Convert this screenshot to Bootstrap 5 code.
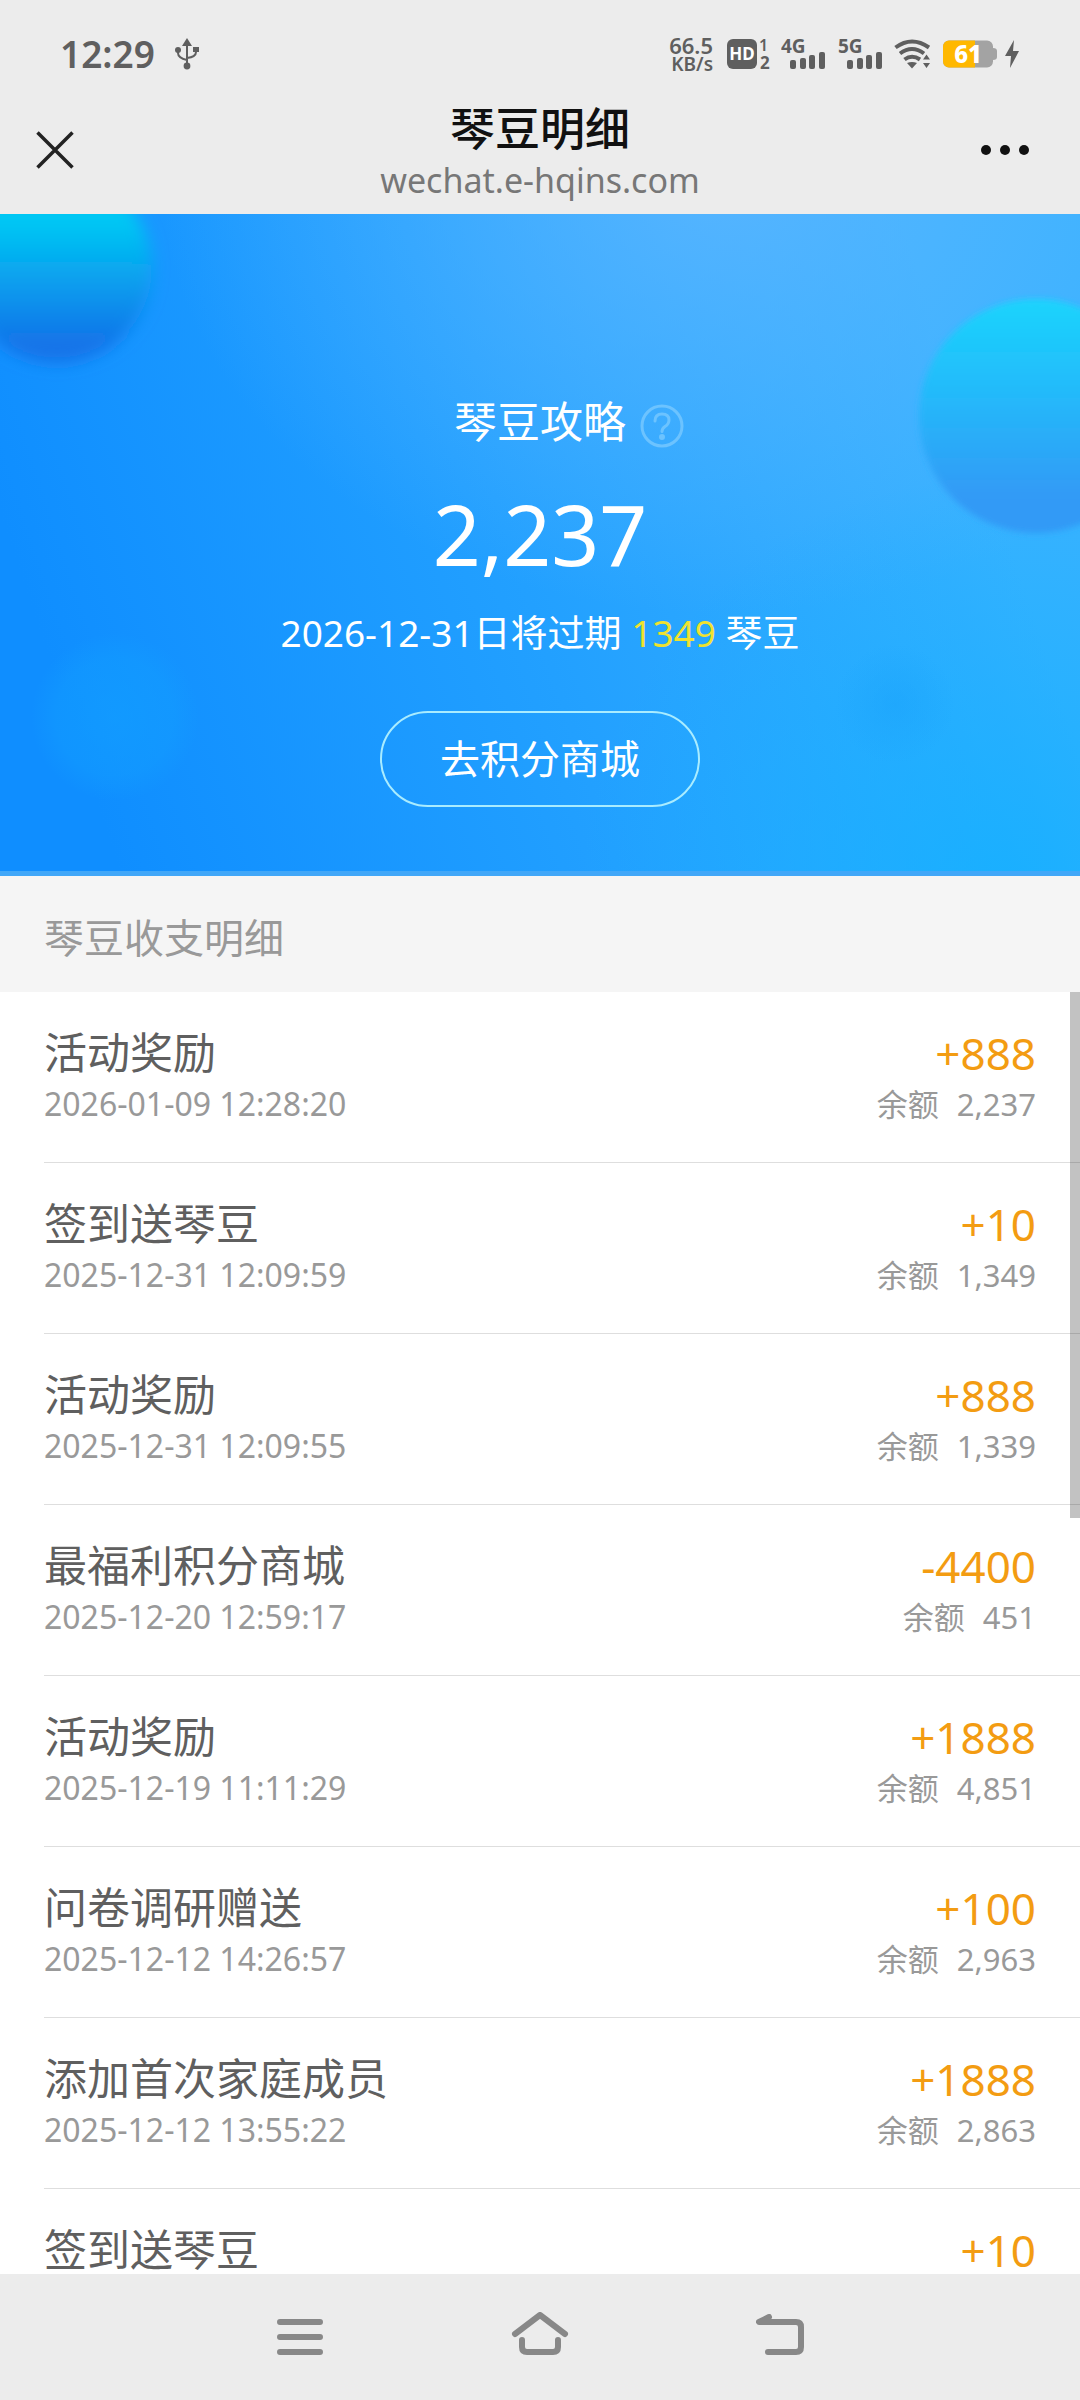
<!DOCTYPE html>
<html lang="zh-CN">
<head>
<meta charset="utf-8">
<meta name="viewport" content="width=device-width, initial-scale=1">
<title>琴豆明细</title>
<link href="https://cdn.jsdelivr.net/npm/bootstrap@5.3.0/dist/css/bootstrap.min.css" rel="stylesheet">
<style>
  body { font-family: "Noto Sans", "Noto Sans CJK SC", sans-serif; color: #5f5f5f; background: #fff; }
  svg { display: block; }
  .chrome-bg { background: #ececec; }
  .status-bar { height: 108px; padding: 0 60px; }
  .clock { font-size: 37px; line-height: 48px; font-weight: 600; }
  .net-speed { font-size: 19px; line-height: 18px; font-weight: 600; margin-right: 14px; }
  .net-speed .rate { font-size: 22px; line-height: 20px; }
  .title-bar { height: 106px; padding: 0 36px 22px; }
  .title-side { flex: 1 1 0; padding-right: 15px; }
  .page-title { font-size: 45px; line-height: 60px; font-weight: 500; color: #111; }
  .page-host { font-size: 34px; line-height: 42px; color: #777; }
  .hero { padding: 180px 0 64px; border-bottom: 5px solid #41a7f8; background: #1c9bff; }
  .hero-art { inset: 0; }
  .guide-link { font-size: 43px; line-height: 56px; }
  .guide-icon { left: 100%; top: 10px; margin-left: 14px; }
  .bean-total { font-size: 84px; line-height: 100px; margin-top: 34px; }
  .expiry { font-size: 37px; line-height: 50px; margin-top: 24px; }
  .expiry-count { color: #efe22f; }
  .mall-btn, .mall-btn:hover { width: 320px; height: 96px; margin-top: 53px; font-size: 40px; line-height: 48px; color: #fff; border: 2px solid #a9ecff; }
  .section-title { height: 116px; padding: 8px 44px 0; font-size: 40px; font-weight: 400; color: #999; background: #f5f5f5; }
  .record { height: 171px; margin-left: 44px; padding: 37px 44px 0 0; border-bottom: 1px solid #dedede; }
  .record-name { font-size: 43px; line-height: 48px; color: #5f5f5f; }
  .record-sum { font-size: 44px; line-height: 48px; color: #f39c12; }
  .record-note { font-size: 32px; line-height: 54px; color: #999; }
  .record-note.is-balance { font-size: 31px; }
  .figures { margin-left: 18px; }
  .scroll-thumb { top: 0; right: 0; width: 10px; height: 526px; background: rgba(0,0,0,.24); }
  .nav-keys { height: 126px; padding: 0 180px; }
</style>
</head>
<body>
<div class="d-flex flex-column vh-100 overflow-hidden">
  <header class="chrome-bg flex-shrink-0">
    <div class="status-bar d-flex align-items-center justify-content-between">
      <div class="d-flex align-items-center gap-3">
        <span class="clock">12:29</span>
        <svg class="ms-1" width="24" height="32" viewBox="0 0 24 32" fill="none" stroke="#5f5f5f" stroke-width="2" aria-hidden="true"><path d="M12 5v22M3 12v3q0 5 9 7M21 12v2q0 5-9 6"/><g fill="#5f5f5f" stroke="none"><path d="M12 0l5 8H7zM18 9h6v5h-6z"/><circle cx="3" cy="12" r="3"/><circle cx="12" cy="28" r="3.400"/></g></svg>
      </div>
      <div class="d-flex align-items-center">
        <div class="net-speed text-end"><div class="rate">66.5</div><div>KB/s</div></div>
        <svg class="me-2" width="46" height="44" viewBox="0 -6 46 44" fill="#5f5f5f" font-family="Noto Sans, sans-serif" font-weight="700" aria-label="HD"><rect y="1" width="30" height="30" rx="6"/><text x="15" y="22" font-size="17" text-anchor="middle" fill="#fff">HD</text><text x="32" y="13" font-size="16" font-weight="600">1</text><text x="33" y="31" font-size="17">2</text></svg>
        <svg width="45" height="44" viewBox="0 -6 45 44" fill="#5f5f5f" font-family="Noto Sans, sans-serif" font-weight="700" aria-label="4G"><text x="0" y="15" font-size="19">4G</text><rect x="9" y="22" width="6" height="9" rx="2"/><rect x="19" y="20" width="6" height="11" rx="2"/><rect x="28" y="17" width="6" height="14" rx="2"/><rect x="38" y="14" width="6" height="17" rx="2"/></svg>
        <svg class="ms-2" width="60" height="44" viewBox="-4 -6 60 44" fill="#5f5f5f" font-family="Noto Sans, sans-serif" font-weight="700" aria-label="5G"><text x="0" y="15" font-size="19">5G</text><rect x="9" y="22" width="6" height="9" rx="2"/><rect x="19" y="20" width="6" height="11" rx="2"/><rect x="28" y="17" width="6" height="14" rx="2"/><rect x="38" y="14" width="6" height="17" rx="2"/></svg>
        <svg width="37" height="32" viewBox="0 0 37 32" fill="none" stroke="#5f5f5f" stroke-width="4" aria-label="Wi-Fi"><path d="M1.500 9.500Q18 -2.500 35 9.500M6 15.500Q18 6.500 30 15.500M10.500 21.500Q18 16 26 21.500"/><path d="M18 30.500l-5-5.500q5-2 10 0z" fill="#5f5f5f" stroke="none"/><path d="M29 21.500l3.500-5 3.500 5zM29 25l3.500 5 3.500-5z" fill="#5f5f5f" stroke="#ececec" stroke-width="1" paint-order="stroke"/></svg>
        <svg class="mx-2" width="58" height="44" viewBox="-3 -6 58 44" font-family="Noto Sans, sans-serif" aria-label="61%"><path d="M7 2.500H45a6 6 0 0 1 6 6V23.500a6 6 0 0 1-6 6H7a6 6 0 0 1-6-6V8.500a6 6 0 0 1 6-6z" fill="#a3a3a3"/><path d="M51 10q4 0 4 3v6q0 3-4 3z" fill="#a3a3a3"/><path d="M33 2.500H7a6 6 0 0 0-6 6V23.500a6 6 0 0 0 6 6H33z" fill="#ffb800"/><text x="26" y="25" font-size="24" font-weight="800" text-anchor="middle" fill="#fff">61</text></svg>
        <svg width="15" height="32" viewBox="0 0 15 32" fill="#5f5f5f" aria-hidden="true"><path d="M9 2L0 18h6L5 30 14 13H8z"/></svg>
      </div>
    </div>
    <div class="title-bar d-flex align-items-center">
      <div class="title-side">
        <button type="button" class="btn p-0 border-0" aria-label="关闭"><svg width="38" height="38" viewBox="0 0 38 38" stroke="#222" stroke-width="3.500"><path d="M1.500 1.500l35 35M36.500 1.500l-35 35"/></svg></button>
      </div>
      <div class="text-center">
        <h1 class="page-title m-0">琴豆明细</h1>
        <div class="page-host">wechat.e-hqins.com</div>
      </div>
      <div class="title-side d-flex justify-content-end">
        <button type="button" class="btn p-0 border-0" aria-label="更多"><svg width="48" height="10" viewBox="0 0 48 10" fill="#111"><circle cx="5" cy="5" r="5"/><circle cx="24" cy="5" r="5"/><circle cx="43" cy="5" r="5"/></svg></button>
      </div>
    </div>
  </header>

  <section class="hero position-relative flex-shrink-0 text-white">
    <svg class="hero-art position-absolute w-100 h-100" viewBox="0 0 1080 657" preserveAspectRatio="none" aria-hidden="true">
      <defs>
        <linearGradient id="base" gradientUnits="userSpaceOnUse" x1="60" y1="480" x2="960" y2="180"><stop offset="0" stop-color="#0f8eff"/><stop offset=".5" stop-color="#22a0ff"/><stop offset="1" stop-color="#38b2ff"/></linearGradient>
        <radialGradient id="glow" gradientUnits="userSpaceOnUse" cx="0" cy="0" r="1" gradientTransform="translate(720 -40) scale(560 440)"><stop offset="0" stop-color="#5cb6ff" stop-opacity=".85"/><stop offset="1" stop-color="#5cb6ff" stop-opacity="0"/></radialGradient>
        <radialGradient id="corner" gradientUnits="userSpaceOnUse" cx="1000" cy="680" r="420"><stop offset="0" stop-color="#12b0ff" stop-opacity=".8"/><stop offset="1" stop-color="#12b0ff" stop-opacity="0"/></radialGradient>
        <linearGradient id="orbA" x1="0" y1="0" x2="0" y2="1"><stop offset=".25" stop-color="#00c8f4"/><stop offset=".9" stop-color="#1373e8"/></linearGradient>
        <linearGradient id="orbB" x1="0" y1="0" x2="0" y2="1"><stop offset="0" stop-color="#1ad4fd"/><stop offset=".4" stop-color="#24bafa"/><stop offset=".85" stop-color="#329af6"/></linearGradient>
        <radialGradient id="orbC"><stop offset="0" stop-color="#12a0ff" stop-opacity=".6"/><stop offset=".7" stop-color="#12a0ff" stop-opacity=".4"/><stop offset="1" stop-color="#12a0ff" stop-opacity="0"/></radialGradient>
        <radialGradient id="orbD"><stop offset="0" stop-color="#1aa2fb" stop-opacity=".5"/><stop offset="1" stop-color="#1aa2fb" stop-opacity="0"/></radialGradient>
        <filter id="softA" x="-20%" y="-20%" width="140%" height="140%"><feGaussianBlur stdDeviation="8"/></filter>
        <filter id="softB" x="-20%" y="-20%" width="140%" height="140%"><feGaussianBlur stdDeviation="3"/></filter>
      </defs>
      <rect width="1080" height="657" fill="url(#base)"/>
      <rect width="1080" height="657" fill="url(#glow)"/>
      <rect width="1080" height="657" fill="url(#corner)"/>
      <circle cx="57" cy="54" r="95" fill="url(#orbA)" filter="url(#softA)"/>
      <circle cx="1036" cy="202" r="117" fill="url(#orbB)" filter="url(#softB)"/>
      <circle cx="115" cy="503" r="84" fill="url(#orbC)"/>
      <circle cx="895" cy="490" r="60" fill="url(#orbD)"/>
    </svg>
    <div class="position-relative d-flex flex-column align-items-center">
      <a href="#guide" class="guide-link position-relative text-white text-decoration-none">琴豆攻略<span class="guide-icon position-absolute"><svg width="44" height="44" viewBox="0 0 44 44" fill="none" stroke="#6cc3ff" stroke-width="3" stroke-linecap="round"><circle cx="22" cy="22" r="20"/><path d="M15 17q0-7 7-7t7 6q0 4-4 6.500-3 2-3 5"/><circle cx="22" cy="33" r="1.500" fill="#6cc3ff"/></svg></span></a>
      <div class="bean-total">2,237</div>
      <div class="expiry">2026-12-31日将过期 <span class="expiry-count">1349</span> 琴豆</div>
      <button type="button" class="btn rounded-pill mall-btn">去积分商城</button>
    </div>
  </section>

  <h2 class="section-title m-0 d-flex align-items-center flex-shrink-0"><span>琴豆收支明细</span></h2>

  <main class="position-relative flex-fill overflow-hidden bg-white">
    <ul class="list-unstyled m-0">
      <li class="record d-flex justify-content-between"><div><div class="record-name">活动奖励</div><div class="record-note">2026-01-09 12:28:20</div></div><div class="text-end"><div class="record-sum">+888</div><div class="record-note is-balance">余额<span class="figures">2,237</span></div></div></li>
      <li class="record d-flex justify-content-between"><div><div class="record-name">签到送琴豆</div><div class="record-note">2025-12-31 12:09:59</div></div><div class="text-end"><div class="record-sum">+10</div><div class="record-note is-balance">余额<span class="figures">1,349</span></div></div></li>
      <li class="record d-flex justify-content-between"><div><div class="record-name">活动奖励</div><div class="record-note">2025-12-31 12:09:55</div></div><div class="text-end"><div class="record-sum">+888</div><div class="record-note is-balance">余额<span class="figures">1,339</span></div></div></li>
      <li class="record d-flex justify-content-between"><div><div class="record-name">最福利积分商城</div><div class="record-note">2025-12-20 12:59:17</div></div><div class="text-end"><div class="record-sum">-4400</div><div class="record-note is-balance">余额<span class="figures">451</span></div></div></li>
      <li class="record d-flex justify-content-between"><div><div class="record-name">活动奖励</div><div class="record-note">2025-12-19 11:11:29</div></div><div class="text-end"><div class="record-sum">+1888</div><div class="record-note is-balance">余额<span class="figures">4,851</span></div></div></li>
      <li class="record d-flex justify-content-between"><div><div class="record-name">问卷调研赠送</div><div class="record-note">2025-12-12 14:26:57</div></div><div class="text-end"><div class="record-sum">+100</div><div class="record-note is-balance">余额<span class="figures">2,963</span></div></div></li>
      <li class="record d-flex justify-content-between"><div><div class="record-name">添加首次家庭成员</div><div class="record-note">2025-12-12 13:55:22</div></div><div class="text-end"><div class="record-sum">+1888</div><div class="record-note is-balance">余额<span class="figures">2,863</span></div></div></li>
      <li class="record d-flex justify-content-between"><div class="record-name">签到送琴豆</div><div class="record-sum">+10</div></li>
    </ul>
    <div class="scroll-thumb position-absolute"></div>
  </main>

  <nav class="nav-keys chrome-bg d-flex align-items-center flex-shrink-0" aria-label="系统导航">
    <button type="button" class="btn border-0 p-0 w-100 d-flex justify-content-center" aria-label="菜单"><svg width="46" height="44" viewBox="0 0 46 44" stroke="#888" stroke-width="6" stroke-linecap="round"><path d="M3 7h40M3 22h40M3 37h40"/></svg></button>
    <button type="button" class="btn border-0 p-0 w-100 d-flex justify-content-center" aria-label="主页"><svg width="58" height="50" viewBox="0 0 58 50" fill="none" stroke="#888" stroke-width="6" stroke-linecap="round" stroke-linejoin="round"><path d="M4 22L29 3l25 19M11 28v7q0 5 5 5h26q5 0 5-5v-7"/></svg></button>
    <button type="button" class="btn border-0 p-0 w-100 d-flex justify-content-center" aria-label="返回"><svg width="48" height="46" viewBox="0 0 48 46" fill="none" stroke="#888" stroke-width="6" stroke-linecap="round" stroke-linejoin="round"><path d="M13 3L3 8h37q5 0 5 5v20q0 5-5 5H12"/></svg></button>
  </nav>
</div>
<script src="https://cdn.jsdelivr.net/npm/bootstrap@5.3.0/dist/js/bootstrap.bundle.min.js"></script>
</body>
</html>
